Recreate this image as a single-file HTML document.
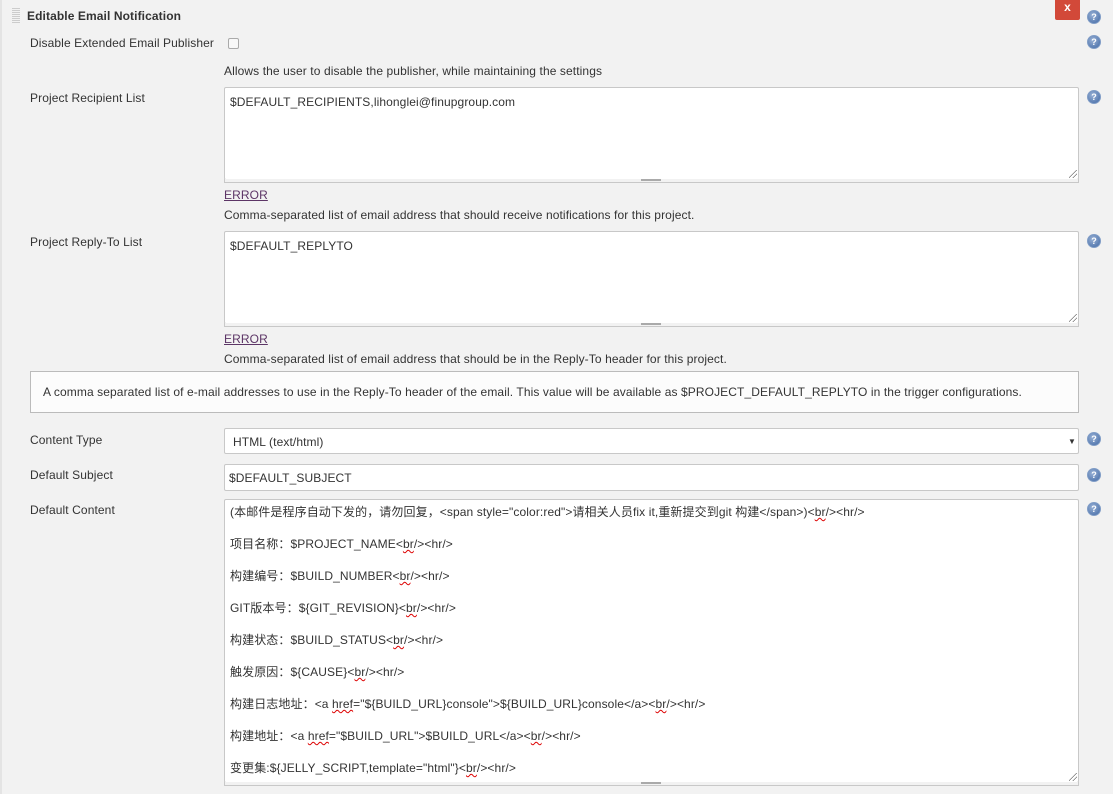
<!DOCTYPE html>
<html><head><meta charset="utf-8"><style>
body{margin:0;width:1113px;height:794px;background:#f2f2f2;font-family:"Liberation Sans","Noto Sans CJK SC",sans-serif;font-size:12px;color:#333;position:relative;overflow:hidden;letter-spacing:0.1px}
.a{position:absolute;white-space:nowrap}
.box{position:absolute;background:#fff;border:1px solid #c8c8c8;border-radius:2px;box-sizing:border-box}
.grip{position:absolute;height:4px;background:#f2f2f2;border:1px solid #c8c8c8;border-top:none;box-sizing:border-box}
.grip i{position:absolute;left:416px;top:0;width:20px;height:2px;background:#aaa}
.rz{position:absolute;right:1px;bottom:1px;width:8px;height:8px;background:linear-gradient(135deg,transparent 45%,#777 45%,#777 52%,transparent 52%,transparent 70%,#777 70%,#777 77%,transparent 77%)}
.h{position:absolute;left:1087px;width:14px;height:14px;border-radius:50%;background:radial-gradient(circle at 40% 35%,#9ab2d6,#3f67a3);border:1px solid #7f9cc6;box-sizing:border-box;color:#fff;font-size:9px;font-weight:bold;text-align:center;line-height:12px;letter-spacing:0}
.err{color:#5c3566;text-decoration:underline}
.c{position:absolute;left:230px;line-height:16px}
u.w{text-decoration:underline wavy #d00;text-decoration-thickness:1px}
</style></head><body>
<div class="a" style="left:0;top:0;width:2px;height:794px;background:#e4e4e4"></div>
<div class="a" style="left:12px;top:8px;width:8px;height:16px;background:repeating-linear-gradient(#ccc 0 1px,transparent 1px 2px)"></div>
<div class="a" style="left:27px;top:9px;font-weight:bold">Editable Email Notification</div>
<div class="a" style="left:1055px;top:0;width:25px;height:20px;background:#d24939;color:#fff;font-weight:bold;text-align:center;line-height:14px;border-radius:0 0 2px 2px">x</div>
<div class="h" style="top:10px">?</div>
<div class="a" style="left:30px;top:36px">Disable Extended Email Publisher</div>
<div class="a" style="left:228px;top:38px;width:9px;height:9px;border:1px solid #aaa;border-radius:2px;background:#f8f8f8"></div>
<div class="h" style="top:35px">?</div>
<div class="a" style="left:224px;top:64px">Allows the user to disable the publisher, while maintaining the settings</div>

<div class="a" style="left:30px;top:91px">Project Recipient List</div>
<div class="box" style="left:224px;top:87px;width:855px;height:93px"><div class="a" style="left:5px;top:7px">$DEFAULT_RECIPIENTS,lihonglei@finupgroup.com</div><div class="rz"></div></div>
<div class="grip" style="left:224px;top:179px;width:855px"><i></i></div>
<div class="h" style="top:90px">?</div>
<div class="a err" style="left:224px;top:188px">ERROR</div>
<div class="a" style="left:224px;top:208px">Comma-separated list of email address that should receive notifications for this project.</div>

<div class="a" style="left:30px;top:235px">Project Reply-To List</div>
<div class="box" style="left:224px;top:231px;width:855px;height:93px"><div class="a" style="left:5px;top:7px">$DEFAULT_REPLYTO</div><div class="rz"></div></div>
<div class="grip" style="left:224px;top:323px;width:855px"><i></i></div>
<div class="h" style="top:234px">?</div>
<div class="a err" style="left:224px;top:332px">ERROR</div>
<div class="a" style="left:224px;top:352px">Comma-separated list of email address that should be in the Reply-To header for this project.</div>

<div class="a" style="left:30px;top:371px;width:1049px;height:42px;border:1px solid #bbb;background:#fcfcfc;box-sizing:border-box"></div>
<div class="a" style="left:43px;top:385px">A comma separated list of e-mail addresses to use in the Reply-To header of the email. This value will be available as $PROJECT_DEFAULT_REPLYTO in the trigger configurations.</div>

<div class="a" style="left:30px;top:433px">Content Type</div>
<div class="box" style="left:224px;top:428px;width:855px;height:26px"><div class="a" style="left:8px;top:6px">HTML (text/html)</div><div class="a" style="left:843px;top:8px;font-size:8px">▼</div></div>
<div class="h" style="top:432px">?</div>
<div class="a" style="left:30px;top:468px">Default Subject</div>
<div class="box" style="left:224px;top:464px;width:855px;height:27px"><div class="a" style="left:4px;top:6px">$DEFAULT_SUBJECT</div></div>
<div class="h" style="top:468px">?</div>
<div class="a" style="left:30px;top:503px">Default Content</div>
<div class="box" style="left:224px;top:499px;width:855px;height:284px"><div class="rz"></div></div>
<div class="grip" style="left:224px;top:782px;width:855px"><i></i></div>
<div class="h" style="top:502px">?</div>
<div class="c" style="top:504px">(本邮件是程序自动下发的，请勿回复，&lt;span style="color:red"&gt;请相关人员fix it,重新提交到git 构建&lt;/span&gt;)&lt;<u class="w">br</u>/&gt;&lt;hr/&gt;</div>
<div class="c" style="top:536px">项目名称：$PROJECT_NAME&lt;<u class="w">br</u>/&gt;&lt;hr/&gt;</div>
<div class="c" style="top:568px">构建编号：$BUILD_NUMBER&lt;<u class="w">br</u>/&gt;&lt;hr/&gt;</div>
<div class="c" style="top:600px">GIT版本号：${GIT_REVISION}&lt;<u class="w">br</u>/&gt;&lt;hr/&gt;</div>
<div class="c" style="top:632px">构建状态：$BUILD_STATUS&lt;<u class="w">br</u>/&gt;&lt;hr/&gt;</div>
<div class="c" style="top:664px">触发原因：${CAUSE}&lt;<u class="w">br</u>/&gt;&lt;hr/&gt;</div>
<div class="c" style="top:696px">构建日志地址：&lt;a <u class="w">href</u>="${BUILD_URL}console"&gt;${BUILD_URL}console&lt;/a&gt;&lt;<u class="w">br</u>/&gt;&lt;hr/&gt;</div>
<div class="c" style="top:728px">构建地址：&lt;a <u class="w">href</u>="$BUILD_URL"&gt;$BUILD_URL&lt;/a&gt;&lt;<u class="w">br</u>/&gt;&lt;hr/&gt;</div>
<div class="c" style="top:760px">变更集:${JELLY_SCRIPT,template="html"}&lt;<u class="w">br</u>/&gt;&lt;hr/&gt;</div>
</body></html>
